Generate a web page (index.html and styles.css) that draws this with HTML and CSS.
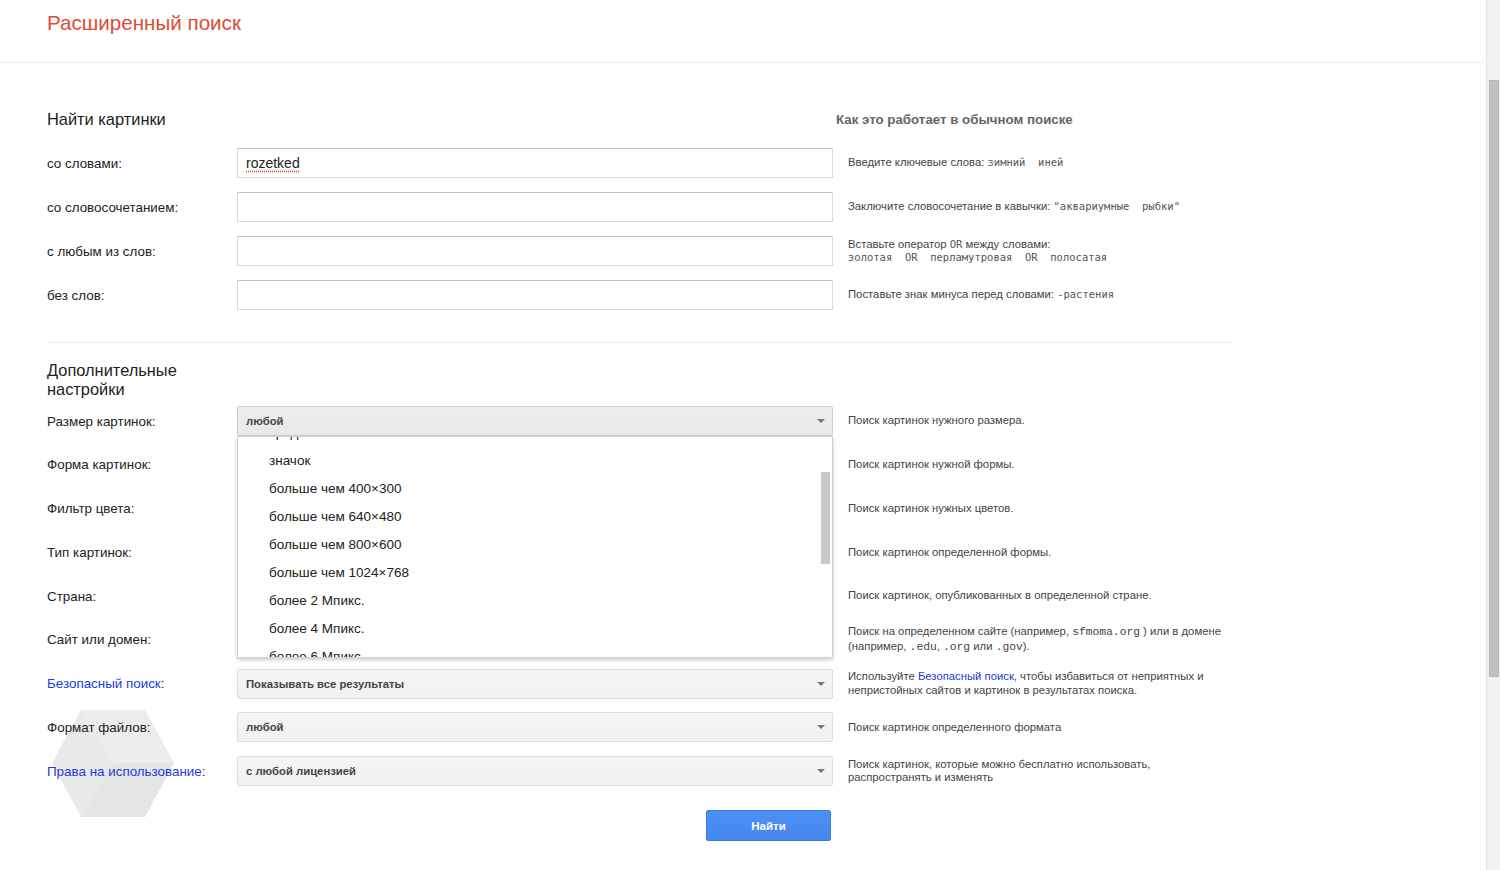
FILE: index.html
```html
<!DOCTYPE html>
<html lang="ru">
<head>
<meta charset="utf-8">
<title>Расширенный поиск</title>
<link rel="stylesheet" href="styles.css">
</head>
<body>
<div class="viewport">
  <div class="page">
    <svg class="hex" width="124" height="109" viewBox="0 0 124 109" aria-hidden="true">
      <polygon points="61,53 29,0 93,0 122,53" fill="#ececec"/>
      <polygon points="61,53 122,53 93,107 29,107" fill="#e5e5e5"/>
      <polygon points="61,53 29,107 0,53 29,0" fill="#e9e9e9"/>
    </svg>
    <header class="topbar">
      <h1 class="title">Расширенный поиск</h1>
    </header>
    <main class="content">
      <section class="sec-find">
        <div class="row head-row">
          <h2 class="sec-title">Найти картинки</h2>
          <div></div>
          <div class="hint-head">Как это работает в обычном поиске</div>
        </div>
        <div class="rows">
          <div class="row">
            <div class="lbl">со словами:</div>
            <div class="field"><span class="typed">rozetked</span></div>
            <div class="hint">Введите ключевые слова: <span class="mono">зимний&nbsp; иней</span></div>
          </div>
          <div class="row">
            <div class="lbl">со словосочетанием:</div>
            <div class="field"></div>
            <div class="hint">Заключите словосочетание в кавычки: <span class="mono">"аквариумные&nbsp; рыбки"</span></div>
          </div>
          <div class="row">
            <div class="lbl">с любым из слов:</div>
            <div class="field"></div>
            <div class="hint">Вставьте оператор <span class="mono">OR</span> между словами:<br><span class="mono">золотая&nbsp; OR&nbsp; перламутровая&nbsp; OR&nbsp; полосатая</span></div>
          </div>
          <div class="row">
            <div class="lbl">без слов:</div>
            <div class="field"></div>
            <div class="hint">Поставьте знак минуса перед словами: <span class="mono">-растения</span></div>
          </div>
        </div>
      </section>

      <div class="divider"></div>

      <section class="sec-more">
        <h2 class="sec-title more-title">Дополнительные настройки</h2>
        <div class="rows rows-more">
          <div class="row">
            <div class="lbl">Размер картинок:</div>
            <div class="select select-open">
              <span>любой</span><span class="arrow"></span>
              <div class="menu">
                <ul>
                  <li>средние</li>
                  <li>значок</li>
                  <li>больше чем 400×300</li>
                  <li>больше чем 640×480</li>
                  <li>больше чем 800×600</li>
                  <li>больше чем 1024×768</li>
                  <li>более 2 Мпикс.</li>
                  <li>более 4 Мпикс.</li>
                  <li>более 6 Мпикс.</li>
                </ul>
                <div class="menu-thumb"></div>
              </div>
            </div>
            <div class="hint">Поиск картинок нужного размера.</div>
          </div>
          <div class="row">
            <div class="lbl">Форма картинок:</div>
            <div class="select"><span></span><span class="arrow"></span></div>
            <div class="hint">Поиск картинок нужной формы.</div>
          </div>
          <div class="row">
            <div class="lbl">Фильтр цвета:</div>
            <div class="select"><span></span><span class="arrow"></span></div>
            <div class="hint">Поиск картинок нужных цветов.</div>
          </div>
          <div class="row">
            <div class="lbl">Тип картинок:</div>
            <div class="select"><span></span><span class="arrow"></span></div>
            <div class="hint">Поиск картинок определенной формы.</div>
          </div>
          <div class="row">
            <div class="lbl">Страна:</div>
            <div class="select"><span></span><span class="arrow"></span></div>
            <div class="hint">Поиск картинок, опубликованных в определенной стране.</div>
          </div>
          <div class="row">
            <div class="lbl">Сайт или домен:</div>
            <div class="field"></div>
            <div class="hint">Поиск на определенном сайте (например, <span class="code">sfmoma.org</span> ) или в домене<br>(например, <span class="code">.edu</span>, <span class="code">.org</span> или <span class="code">.gov</span>).</div>
          </div>
          <div class="row">
            <div class="lbl"><a class="link" href="#">Безопасный поиск</a>:</div>
            <div class="select"><span>Показывать все результаты</span><span class="arrow"></span></div>
            <div class="hint">Используйте <a class="link" href="#">Безопасный поиск</a>, чтобы избавиться от неприятных и<br>непристойных сайтов и картинок в результатах поиска.</div>
          </div>
          <div class="row">
            <div class="lbl">Формат файлов:</div>
            <div class="select"><span>любой</span><span class="arrow"></span></div>
            <div class="hint">Поиск картинок определенного формата</div>
          </div>
          <div class="row">
            <div class="lbl"><a class="link" href="#">Права на использование</a>:</div>
            <div class="select"><span>с любой лицензией</span><span class="arrow"></span></div>
            <div class="hint">Поиск картинок, которые можно бесплатно использовать,<br>распространять и изменять</div>
          </div>
        </div>
        <div class="row btn-row">
          <div></div>
          <button class="btn" type="button">Найти</button>
          <div></div>
        </div>
      </section>
    </main>
  </div>
  <div class="scrollbar"><div class="thumb"></div></div>
</div>
</body>
</html>
```

FILE: styles.css
```css
* { box-sizing: border-box; }
html, body { margin: 0; padding: 0; }
body {
  font-family: "Liberation Sans", Arial, Helvetica, sans-serif;
  color: #222;
  background: #fff;
  width: 1500px;
  height: 870px;
  overflow: hidden;
}
.viewport { display: flex; height: 870px; }
.page { flex: 1; position: relative; min-width: 0; }

.scrollbar {
  width: 14px;
  background: #f1f1f1;
  border-left: 1px solid #e4e4e4;
  padding: 80px 1px 0 2px;
}
.scrollbar .thumb {
  height: 597px;
  background: #c1c1c1;
  border: 1px solid #b5b5b5;
}

.hex { position: absolute; left: 52px; top: 710px; z-index: -1; }

.topbar {
  height: 63px;
  border-bottom: 1px solid #ebebeb;
  padding: 13px 0 0 47px;
  margin-right: 3px;
}
.title {
  margin: 0;
  font-size: 20.6px;
  line-height: 20px;
  font-weight: normal;
  color: #dd4b39;
}

.content { width: 1233px; padding-left: 47px; }
.sec-find { padding-top: 46px; }

.row {
  display: grid;
  grid-template-columns: 190px 596px 1fr;
  align-items: center;
}
.rows { display: flex; flex-direction: column; gap: 14px; }
.rows-more { gap: 13.75px; }

.head-row { height: 20px; margin-bottom: 19px; }
.sec-title {
  margin: 0;
  font-size: 16.4px;
  line-height: 20px;
  font-weight: normal;
  color: #222;
}
.hint-head {
  padding-left: 3px;
  font-size: 13.3px;
  font-weight: bold;
  color: #666;
}

.lbl { font-size: 13.4px; color: #222; }
.link { color: #1a3be0; text-decoration: none; }

.field {
  height: 30px;
  border: 1px solid #d9d9d9;
  border-top-color: #c4c4c4;
  background: #fff;
  padding: 0 8px;
  display: flex;
  align-items: center;
  font-size: 14px;
  color: #222;
}
.typed {
  text-decoration: underline dotted #e53935;
  text-underline-offset: 3px;
}

.hint {
  padding-left: 15px;
  font-size: 11.3px;
  line-height: 13.5px;
  color: #444;
}
.mono { font-family: "DejaVu Sans Mono", monospace; font-size: 10.5px; color: #555; }
.code { font-family: "Liberation Mono", "Courier New", monospace; font-size: 11.3px; color: #444; }

.divider { height: 1px; background: #ebebeb; margin-top: 32px; }

.sec-more { padding-top: 18px; }
.more-title { width: 150px; line-height: 19px; margin-bottom: 7px; }

.select {
  position: relative;
  height: 30px;
  border: 1px solid #dcdcdc;
  border-radius: 2px;
  background: linear-gradient(#f5f5f5, #f1f1f1);
  display: flex;
  align-items: center;
  justify-content: space-between;
  padding: 0 7px 0 8px;
  font-size: 11.3px;
  font-weight: bold;
  color: #444;
}
.select-open {
  background: linear-gradient(#eeeeee, #e8e8e8);
  border-color: #cfcfcf;
  box-shadow: 0 1px 1px rgba(0,0,0,.08);
}
.arrow {
  width: 0;
  height: 0;
  border-left: 4px solid transparent;
  border-right: 4px solid transparent;
  border-top: 4px solid #777;
}

.menu {
  position: absolute;
  left: -1px;
  right: -1px;
  top: 29px;
  height: 222px;
  background: #fff;
  border: 1px solid rgba(0,0,0,.18);
  box-shadow: 0 2px 4px rgba(0,0,0,.2);
  overflow: hidden;
  z-index: 5;
  font-size: 13.5px;
  font-weight: normal;
  color: #222;
}
.menu ul { list-style: none; margin: -18px 0 0; padding: 0; }
.menu li { height: 28px; line-height: 28px; padding-left: 31px; }
.menu-thumb {
  position: absolute;
  right: 2px;
  top: 35px;
  width: 9px;
  height: 92px;
  background: #c8c8c8;
}

.btn-row { margin-top: 24px; }
.btn {
  justify-self: end;
  margin-right: 2px;
  width: 125px;
  height: 31px;
  border: 1px solid #3b7de8;
  border-radius: 2px;
  background: linear-gradient(#4d90f5, #4787ed);
  color: #fff;
  font-family: "Liberation Sans", Arial, sans-serif;
  font-size: 11.5px;
  font-weight: bold;
  padding: 0;
}
```
